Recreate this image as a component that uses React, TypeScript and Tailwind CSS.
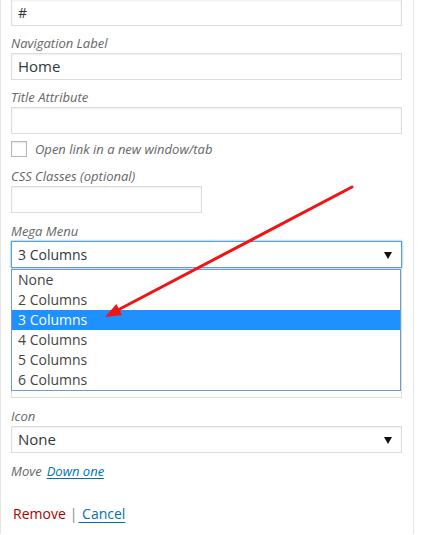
import React from "react";

const Label = ({ children, className = "" }: { children: React.ReactNode; className?: string }) => (
  <div className={`h-[18px] leading-[18px] text-[13px] italic text-[#666] mb-[1px] ${className}`}>{children}</div>
);

const Caret = () => (
  <svg width="8" height="7" viewBox="0 0 8 7" className="absolute right-[9px] top-[10px]">
    <polygon points="0,0 8,0 4,7" fill="#111" />
  </svg>
);

export default function App() {
  const options = ["None", "2 Columns", "3 Columns", "4 Columns", "5 Columns", "6 Columns"];
  return (
    <div className="relative w-[448px] h-[535px] bg-white overflow-hidden font-['Open_Sans',sans-serif] text-[#32373c]">
      <div className="w-[414px] h-full border-x border-[#e5e5e5] pl-[10px] pr-[11px]">
        <div className="mt-[-1px] h-[27px] border border-[#ddd] shadow-[inset_0_1px_2px_rgba(0,0,0,0.07)] px-[6px] flex items-center text-[14px]">
          #
        </div>

        <Label className="mt-[8px]">Navigation Label</Label>
        <div className="h-[27px] border border-[#ddd] shadow-[inset_0_1px_2px_rgba(0,0,0,0.07)] px-[6px] flex items-center text-[15px]">
          Home
        </div>

        <Label className="mt-[8px]">Title Attribute</Label>
        <div className="h-[27px] border border-[#ddd] shadow-[inset_0_1px_2px_rgba(0,0,0,0.07)]" />

        <div className="mt-[7px] h-[16px] flex items-center gap-[8px]">
          <div className="w-[16px] h-[16px] border border-[#b4b9be] bg-white shadow-[inset_0_1px_2px_rgba(0,0,0,0.1)]" />
          <span className="text-[13px] italic text-[#666] leading-[18px]">Open link in a new window/tab</span>
        </div>

        <Label className="mt-[10px]">CSS Classes (optional)</Label>
        <div className="w-[191px] h-[27px] border border-[#ddd] shadow-[inset_0_1px_2px_rgba(0,0,0,0.07)]" />

        <Label className="mt-[9px]">Mega Menu</Label>
        <div className="relative h-[27px] border border-[#5b9dd9] shadow-[0_0_2px_rgba(30,140,190,0.8)] px-[6px] flex items-center text-[14px]">
          3 Columns
          <Caret />
        </div>
        <div className="relative h-[130px] border border-[#ddd]">
          <div className="absolute left-[-1px] right-[0px] top-[0px] border border-[#6f99d3] bg-white">
            {options.map((o) => (
              <div
                key={o}
                className={`h-[20px] leading-[20px] px-[6px] text-[14px] ${
                  o === "3 Columns" ? "bg-[#1e90ff] text-white" : "text-[#444]"
                }`}
              >
                {o}
              </div>
            ))}
          </div>
        </div>

        <Label className="mt-[9px]">Icon</Label>
        <div className="relative h-[27px] border border-[#ddd] shadow-[inset_0_1px_2px_rgba(0,0,0,0.07)] px-[6px] flex items-center text-[15px]">
          None
          <Caret />
        </div>

        <div className="mt-[9px] h-[18px] leading-[18px] text-[13px] italic text-[#666] flex gap-[5px]">
          <span>Move</span>
          <span className="text-[#0073aa] underline underline-offset-2">Down one</span>
        </div>

        <div className="mt-[24px] h-[20px] leading-[20px] text-[14px] flex items-center ml-[2px]">
          <span className="text-[#a00]">Remove</span>
          <span className="text-[#888] ml-[4px] mr-[1px]">|</span>
          <span className="text-[#0073aa] underline underline-offset-[3px]">{"\u00a0Cancel"}</span>
        </div>
      </div>

      <svg className="absolute left-0 top-0 pointer-events-none" width="448" height="535">
        <line x1="352" y1="187" x2="116" y2="311" stroke="#f01414" strokeWidth="3" strokeLinecap="round" />
        <polygon points="105,317 122,315 116.4,304" fill="#f01414" />
      </svg>
    </div>
  );
}
